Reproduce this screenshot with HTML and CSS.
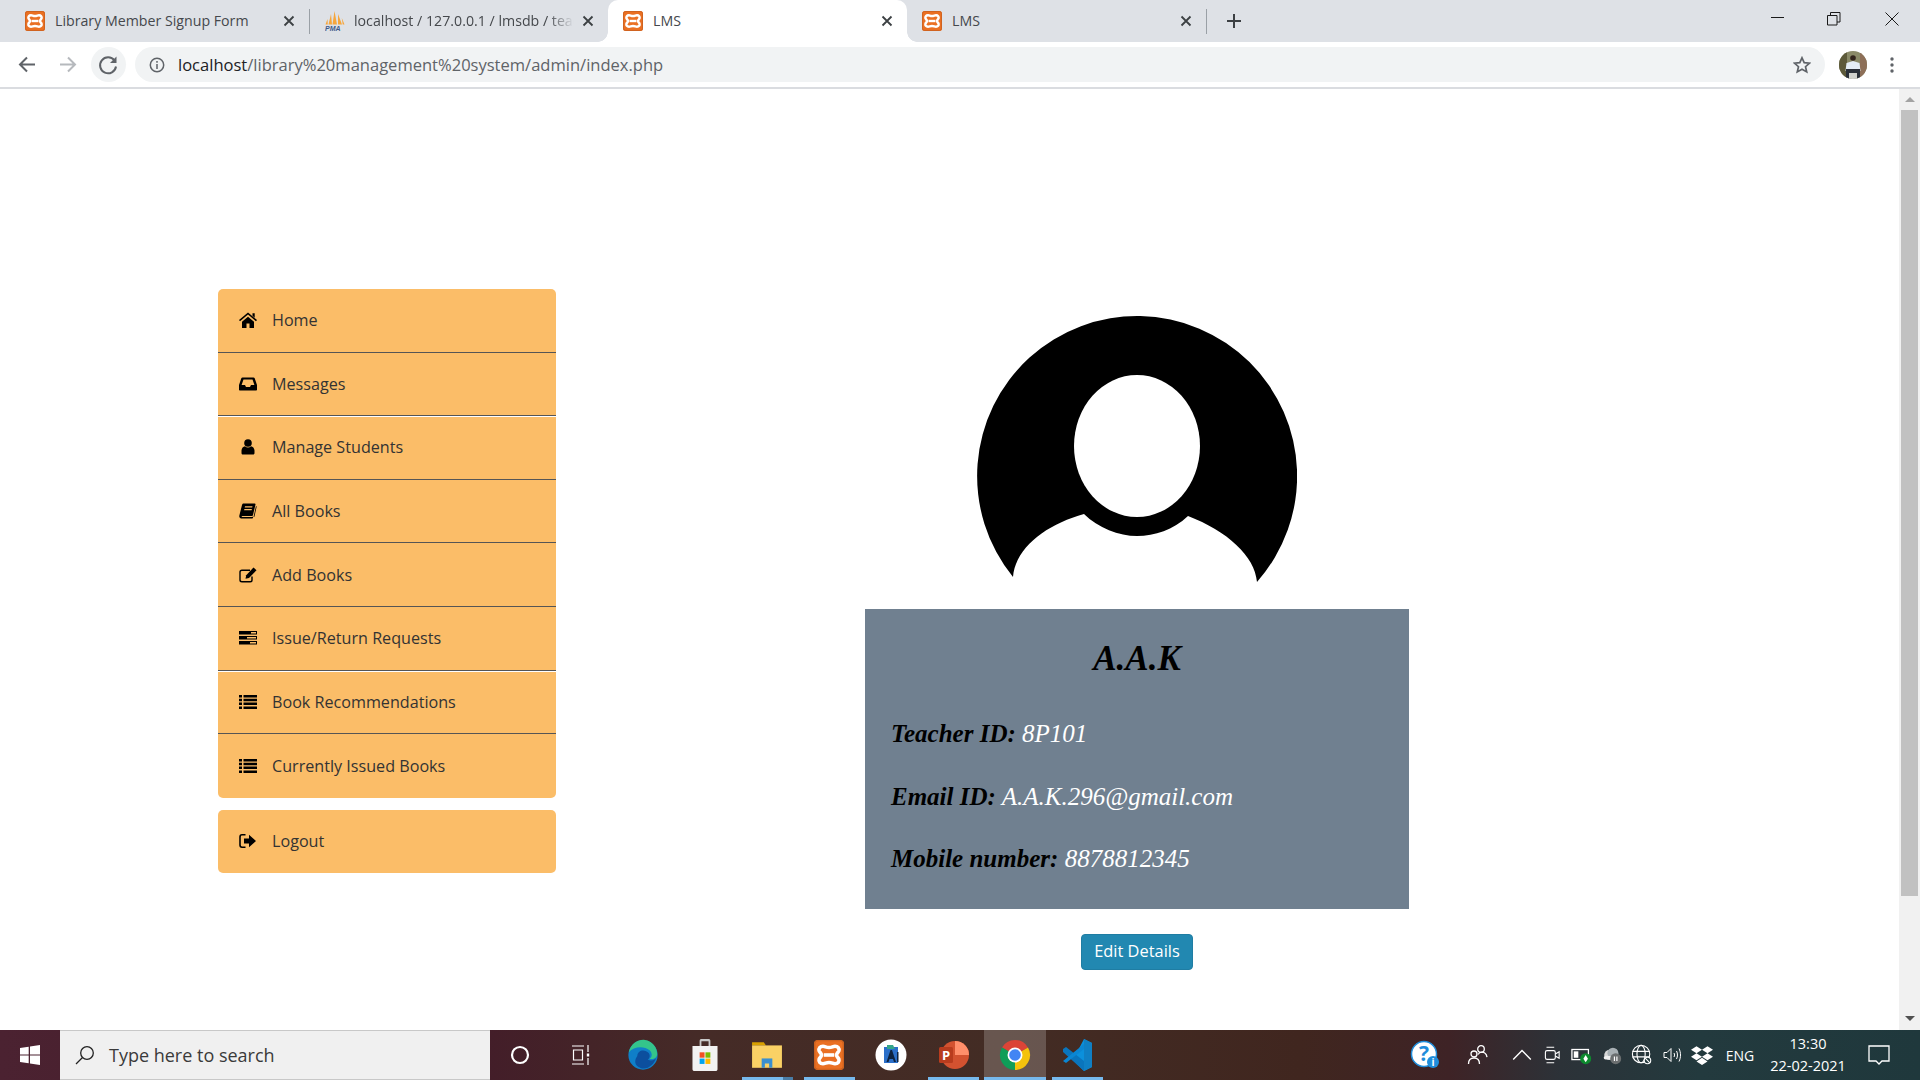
FILE: index.html
```html
<!DOCTYPE html>
<html lang="en">
<head>
<meta charset="utf-8">
<title>LMS</title>
<link rel="stylesheet" href="styles.css">
</head>
<body>
<svg class="defs" width="0" height="0" aria-hidden="true">
  <symbol id="xampp" viewBox="0 0 20 20">
    <rect width="20" height="20" rx="2.5" fill="#ea7023"/>
    <rect x=".5" y=".5" width="19" height="19" rx="2" fill="none" stroke="#c9601f" stroke-width=".8"/>
    <path d="M6 4.200c1.500 0 2 .8 4 .8s2.500-.8 4-.8c2 0 3 1.500 2.600 3-.3 1-1.600 1.600-1.600 2.800s1.300 1.800 1.600 2.800c.4 1.500-.6 3-2.600 3-1.500 0-2-.8-4-.8s-2.500.8-4 .8c-2 0-3-1.500-2.600-3 .3-1 1.600-1.600 1.600-2.800S3.700 8.200 3.400 7.200C3 5.700 4 4.200 6 4.200z" fill="none" stroke="#fff" stroke-width="2.400"/>
    <path d="M6.500 10h7" stroke="#fff" stroke-width="2.400"/>
  </symbol>
  <symbol id="list" viewBox="0 0 18 14">
    <path d="M0 0h3v2.500H0zM4.500 0H18v2.500H4.500zM0 3.800h3v2.500H0zM4.500 3.800H18v2.500H4.500zM0 7.600h3v2.500H0zM4.500 7.600H18v2.500H4.500zM0 11.400h3V14H0zM4.500 11.400H18V14H4.500z" fill="#000"/>
  </symbol>
</svg>
<div class="screen">
  <header class="tabstrip">
    <div class="tab tab-first">
      <svg class="favicon"><use href="#xampp"/></svg>
      <span class="tab-title">Library Member Signup Form</span>
      <svg class="tab-close" viewBox="0 0 12 12"><path d="M1.500 1.500l9 9M10.500 1.500l-9 9"/></svg>
    </div>
    <span class="tab-sep"></span>
    <div class="tab tab-pma">
      <svg class="favicon" viewBox="0 0 20 20">
        <path d="M9.500 0l2.500 13.500H7.500zM6 3l1 10.500H3.500zM13 3l4 10.500h-4zM2.500 8l.3 5.500H.5zM16.800 7l2.700 6.500h-1.800z" fill="#f6a63c"/>
        <text class="pma-text" x="0" y="19.500">PMA</text>
      </svg>
      <span class="tab-title tab-fade">localhost / 127.0.0.1 / lmsdb / teacher</span>
      <svg class="tab-close" viewBox="0 0 12 12"><path d="M1.500 1.500l9 9M10.500 1.500l-9 9"/></svg>
    </div>
    <div class="tab tab-active">
      <svg class="favicon"><use href="#xampp"/></svg>
      <span class="tab-title">LMS</span>
      <svg class="tab-close" viewBox="0 0 12 12"><path d="M1.500 1.500l9 9M10.500 1.500l-9 9"/></svg>
    </div>
    <div class="tab">
      <svg class="favicon"><use href="#xampp"/></svg>
      <span class="tab-title">LMS</span>
      <svg class="tab-close" viewBox="0 0 12 12"><path d="M1.500 1.500l9 9M10.500 1.500l-9 9"/></svg>
    </div>
    <span class="tab-sep"></span>
    <svg class="new-tab" viewBox="0 0 16 16"><path d="M8 1v14M1 8h14"/></svg>
    <div class="win-controls">
      <div class="win-btn"><svg viewBox="0 0 14 14"><path d="M0 5.500h13"/></svg></div>
      <div class="win-btn"><svg viewBox="0 0 14 14"><path d="M.5 3.500h9.500v9.500H.5zM3.500 3.500V.5H13V10h-3"/></svg></div>
      <div class="win-btn"><svg viewBox="0 0 14 14"><path d="M.5.5l13 13M13.500.5l-13 13"/></svg></div>
    </div>
  </header>

  <div class="toolbar">
    <svg class="nav-btn" viewBox="0 0 35 35"><path d="M25 17.500H11M17 10.500l-7 7 7 7" class="nav-dark"/></svg>
    <svg class="nav-btn" viewBox="0 0 35 35"><path d="M10 17.500h14M18 10.500l7 7-7 7" class="nav-light"/></svg>
    <svg class="nav-btn nav-reload" viewBox="0 0 35 35"><path d="M23.500 13.500a8 8 0 1 0 1.500 6" class="nav-dark"/><path d="M25.500 9.500v6.500H19z" class="nav-fill"/></svg>
    <div class="omnibox">
      <svg class="info-icon" viewBox="0 0 16 16"><circle cx="8" cy="8" r="6.700"/><path d="M8 7v5M8 4v1.800"/></svg>
      <span class="url"><span class="url-host">localhost</span>/library%20management%20system/admin/index.php</span>
      <svg class="star" viewBox="0 0 18 18"><path d="M9 1.800l2.200 4.900 5.300.5-4 3.500 1.200 5.200L9 13.200l-4.700 2.700 1.200-5.200-4-3.500 5.300-.5z"/></svg>
    </div>
    <svg class="profile" viewBox="0 0 28 28">
      <defs><clipPath id="round"><circle cx="14" cy="14" r="14"/></clipPath></defs>
      <g clip-path="url(#round)">
        <rect width="28" height="28" fill="#8a8a68"/>
        <rect width="8" height="28" fill="#5d5a3a"/>
        <rect x="21" width="7" height="28" fill="#8d6f58"/>
        <rect x="8" y="22" width="12" height="6" fill="#d0d2cd"/>
        <path d="M7.500 12l6.500-2 6.500 2 1 8h-15z" fill="#e4eef6"/>
        <circle cx="14" cy="7" r="2.800" fill="#33261d"/>
        <path d="M7 18h14v10h-3v-6h-8v6H7z" fill="#2a3038"/>
      </g>
    </svg>
    <svg class="kebab" viewBox="0 0 4 16"><circle cx="2" cy="2" r="1.700"/><circle cx="2" cy="8" r="1.700"/><circle cx="2" cy="14" r="1.700"/></svg>
  </div>

  <div class="viewport">
    <main class="page">
      <nav class="sidebar">
        <ul class="menu">
          <li class="menu-item"><svg class="menu-icon" viewBox="0 0 18 16"><path d="M9 .5l9 7.600-1 1.200L9 2.600 1 9.300 0 8.100zM13.500 1.200h2.200v4.500l-2.200-1.900zM3 9.800l6-5 6 5V16h-4.500v-4.500h-3V16H3z"/></svg>Home</li>
          <li class="menu-item menu-split"><svg class="menu-icon" viewBox="0 0 18 16"><path fill-rule="evenodd" d="M3.500 1.500h11c.6 0 1 .3 1.200.8L18 9v4.500c0 .6-.5 1-1 1H1c-.5 0-1-.4-1-1V9l2.300-6.700c.2-.5.6-.8 1.200-.8zM4.500 3.500L2.600 9H6l1 2h4l1-2h3.400l-1.900-5.500z"/></svg>Messages</li>
          <li class="menu-item"><svg class="menu-icon" viewBox="0 0 18 16"><circle cx="9" cy="4" r="3.800"/><path d="M2.500 14v-2.500C2.500 9.500 4.300 7.300 6 7.300c.8.800 1.900 1.200 3 1.200s2.200-.4 3-1.200c1.700 0 3.500 2.200 3.500 4.200V14c0 1-.7 1.500-1.500 1.500H4c-.8 0-1.500-.5-1.500-1.500z"/></svg>Manage Students</li>
          <li class="menu-item"><svg class="menu-icon" viewBox="0 0 18 16"><path fill-rule="evenodd" d="M4.500.5h11.200c.6 0 .9.500.8 1L14 12c-.2.800-.6 1-1.300 1H3.500c-.9 0-1.100.8-.6 1h10.300l.9-.4-.1 1.100c-.1.300-.4.800-1 .8H2.300C.8 15.500 0 14 .3 12.700L3 2c.2-.9.700-1.500 1.500-1.500zM6 3.300l-.3 1.200h7.500l.3-1.200zM5.400 6l-.3 1.200h7.500l.3-1.200z"/><path d="M17 3l.7.500-2.300 10.300-.9.400z"/></svg>All Books</li>
          <li class="menu-item"><svg class="menu-icon" viewBox="0 0 18 16"><path d="M13 9.500V13c0 1-.7 1.800-1.800 1.800H3c-1.100 0-2-.8-2-1.800V5c0-1 .9-1.800 2-1.800h8" fill="none" stroke="#000" stroke-width="1.400"/><path d="M14.500.500l3 2.700-7.500 7.800-3.500.8.700-3.500z"/></svg>Add Books</li>
          <li class="menu-item menu-split"><svg class="menu-icon" viewBox="0 0 18 16"><path fill-rule="evenodd" d="M0 1h18v3.600H0zM12 2v1.500h5V2zM0 6h18v3.600H0zM8 7v1.500h9V7zM0 11h18v3.600H0zM11 12v1.500h6V12z"/></svg>Issue/Return Requests</li>
          <li class="menu-item"><svg class="menu-icon"><use href="#list"/></svg>Book Recommendations</li>
          <li class="menu-item"><svg class="menu-icon"><use href="#list"/></svg>Currently Issued Books</li>
        </ul>
        <ul class="menu menu-logout">
          <li class="menu-item"><svg class="menu-icon" viewBox="0 0 18 16"><path d="M6.500 1.800H3C1.800 1.800 1 2.700 1 4v8c0 1.300.8 2.200 2 2.200h3.500" fill="none" stroke="#000" stroke-width="1.600"/><path d="M10 1.800l7 6.200-7 6.200v-3.700H5V5.500h5z"/></svg>Logout</li>
        </ul>
      </nav>
      <section class="profile-col">
        <svg class="avatar" viewBox="0 0 320 272">
          <path d="M36 261A160 160 0 1 1 280 266C278 240 250 215 211 200 196 214 178 220 160 220 142 220 121 212 107 198 70 208 38 232 36 261Z"/>
          <ellipse cx="160" cy="130" rx="63" ry="71" fill="#fff"/>
        </svg>
        <div class="card">
          <h3 class="card-name">A.A.K</h3>
          <p class="card-row"><b class="card-label">Teacher ID:</b> 8P101</p>
          <p class="card-row"><b class="card-label">Email ID:</b> A.A.K.296@gmail.com</p>
          <p class="card-row"><b class="card-label">Mobile number:</b> 8878812345</p>
        </div>
        <button class="edit-btn" type="button">Edit Details</button>
      </section>
    </main>
    <aside class="scrollbar">
      <span class="arrow-up"></span>
      <span class="thumb"></span>
      <span class="arrow-down"></span>
    </aside>
  </div>

  <footer class="taskbar">
    <div class="start">
      <svg class="win-logo" viewBox="0 0 20 20"><path d="M0 3l8.700-1.300V9.500H0zM10 1.500L20 0v9.500H10zM0 10.500h8.700v7.800L0 17zM10 10.500h10V20l-10-1.500z"/></svg>
    </div>
    <div class="search">
      <svg class="search-icon" viewBox="0 0 20 20"><circle cx="12" cy="8" r="6.300"/><path d="M7.500 12.500L1 19"/></svg>
      <span class="search-text">Type here to search</span>
    </div>
    <div class="task-cell cell-cortana">
      <svg class="cell-icon-sm" viewBox="0 0 20 20"><circle cx="10" cy="10" r="8" fill="none" stroke="#fff" stroke-width="2.200"/></svg>
    </div>
    <div class="task-cell cell-view">
      <svg class="cell-icon-sm" viewBox="0 0 20 20"><path d="M1 1h12M1 19h12M2.500 5h9v10h-9zM17 0v7M17 13v7" fill="none" stroke="#fff" stroke-width="1.200"/><path d="M15.800 8.500h2.400v3h-2.400z" fill="#fff"/></svg>
    </div>
    <div class="task-cell">
      <svg class="cell-icon" viewBox="0 0 32 36"><circle cx="16" cy="18" r="15.500" fill="#0f7fc8"/><path d="M1 15C3 5 12 1 18 2c8 1 13 8 13 15 0 4-4 6-8 5 3-2 3-6 0-9C17 8 6 9 1 15z" fill="#34c48b"/><path d="M10 19c0-6 8-8 12-3 2 3 1 6-1 7 4 2 8 0 9-2-2 7-9 13-16 11C6 29 7 23 10 19z" fill="#0c4f9e"/></svg>
    </div>
    <div class="task-cell">
      <svg class="cell-icon" viewBox="0 0 32 38"><path d="M10 9V3c0-1.500 1-2 2-2h8c1 0 2 .5 2 2v6h-2V3.500h-8V9z" fill="#c8c8c8"/><path d="M2 9h28v26c0 1-1 2-2 2H4c-1 0-2-1-2-2z" fill="#f2f2f2"/><path d="M10 16h5.500v6H10z" fill="#f25022"/><path d="M16.500 16H22v6h-5.500z" fill="#7fba00"/><path d="M10 23h5.500v6H10z" fill="#00a4ef"/><path d="M16.500 23H22v6h-5.500z" fill="#ffb900"/></svg>
    </div>
    <div class="task-cell cell-open cell-stacked">
      <svg class="cell-icon" viewBox="0 0 30 30"><path d="M1 3h11l2 3H1z" fill="#d8a000"/><path d="M1 6h28v21H1z" fill="#fad165"/><path d="M10 18h10v9h-3v-4h-4v4h-3z" fill="#3a8fd0"/><path d="M7 13h16l1.500 5H5.500z" fill="#fad165"/></svg>
    </div>
    <div class="task-cell cell-open">
      <svg class="cell-icon-xampp"><use href="#xampp"/></svg>
    </div>
    <div class="task-cell">
      <svg class="cell-icon" viewBox="0 0 32 32"><circle cx="16" cy="16" r="15.500" fill="#fff"/><path d="M9 8h14v16H9z" fill="#2b6fc9"/><path d="M12 6h6l2 4h-8z" fill="#35a58a"/><path d="M11.500 23l4-12h1.500l4 12h-2l-1-3h-3.500l-1 3z" fill="#0d2340"/><path d="M22 13h1.500v10H22z" fill="#0d2340"/></svg>
    </div>
    <div class="task-cell cell-open">
      <svg class="cell-icon" viewBox="0 0 32 32"><circle cx="18" cy="16" r="14" fill="#d35230"/><path d="M18 2a14 14 0 0 1 14 14H18z" fill="#ff8f6b"/><rect x="2" y="8" width="14" height="16" rx="1.500" fill="#b83c1e"/><text class="ppt-text" x="5" y="21">P</text></svg>
    </div>
    <div class="task-cell cell-open cell-active">
      <svg class="cell-icon" viewBox="0 0 32 32"><path d="M16 16L3 8.500A15 15 0 0 1 29 8.500z" fill="#db4437"/><path d="M16 16l13-7.500A15 15 0 0 1 16 31z" fill="#f4c20d"/><path d="M16 16v15A15 15 0 0 1 3 8.500z" fill="#0f9d58"/><circle cx="16" cy="16" r="7.500" fill="#fff"/><circle cx="16" cy="16" r="5.800" fill="#4285f4"/></svg>
    </div>
    <div class="task-cell cell-open">
      <svg class="cell-icon" viewBox="0 0 32 34"><path d="M23 1l8 4v24l-8 4-13-13 13-10v21L13 20z" fill="#0b90dc"/><path d="M23 1v32l8-4V5z" fill="#0f7fc4"/><path d="M2 11l3-2 18 14v10L2 14z" fill="#0a75bd"/><path d="M2 23l21-17v5L5 25z" fill="#0a86d3"/></svg>
    </div>
    <div class="tray">
      <svg class="tray-icon tray-help" viewBox="0 0 30 30">
        <circle cx="14" cy="14" r="12.500" fill="#fff" stroke="#1f8ddb" stroke-width="1.500"/>
        <text class="help-text" x="14" y="21">?</text>
        <circle cx="23" cy="22" r="6" fill="#1f8ddb"/>
        <text class="help-i" x="23" y="26">i</text>
      </svg>
      <svg class="tray-icon tray-people" viewBox="0 0 22 22"><g fill="none" stroke="#fff" stroke-width="1.300"><circle cx="14" cy="5" r="3.300"/><circle cx="7" cy="10" r="3"/><path d="M1.500 20c0-3.500 2-6 5.500-6s5.500 2.500 5.500 6M11 10.500c1-1.500 2-2.300 3.500-2.300 3 0 5 2 5.500 5"/></g></svg>
      <svg class="tray-icon" viewBox="0 0 20 20"><path d="M2 14l8-8 8 8" fill="none" stroke="#fff" stroke-width="1.300"/></svg>
      <svg class="tray-icon" viewBox="0 0 20 20"><g fill="none" stroke="#fff" stroke-width="1"><rect x="4" y="6" width="9" height="8" rx="1.500"/><path d="M13 9l3.500-2v6L13 11M5 3h7M5 17h7"/></g></svg>
      <svg class="tray-icon tray-badge" viewBox="0 0 24 24"><rect x="1" y="6" width="18" height="11" fill="none" stroke="#fff" stroke-width="1.400"/><rect x="3" y="8" width="5" height="7" fill="#fff"/><circle cx="16" cy="16" r="6" fill="#0d8a2e"/><path d="M16 12l2.500 4-2.500 4-2.500-4z" fill="#fff"/></svg>
      <svg class="tray-icon tray-badge" viewBox="0 0 24 24"><circle cx="9" cy="12" r="5.500" fill="#d8d8d8"/><circle cx="13" cy="10" r="6" fill="#a8b0b4"/><rect x="3" y="13" width="12" height="4" rx="2" fill="#eee"/><circle cx="16" cy="16" r="6" fill="#6b6f70"/><path d="M14 13.500h1.300v5H14zM16.700 13.500H18v5h-1.300z" fill="#fff"/></svg>
      <svg class="tray-icon tray-badge" viewBox="0 0 24 24"><g fill="none" stroke="#fff" stroke-width="1.200"><circle cx="11" cy="11" r="9.500"/><ellipse cx="11" cy="11" rx="4.500" ry="9.500"/><path d="M1.500 8h19M1.500 14h19"/><circle cx="18" cy="18" r="3.500" fill="#243a3d"/><path d="M15.500 15.500l5 5"/></g></svg>
      <svg class="tray-icon" viewBox="0 0 22 22"><g fill="none" stroke="#fff" stroke-width="1"><path d="M3 8.500h3l4-4v13l-4-4H3z"/><path d="M13 9c.7 1.300.7 2.700 0 4M15.500 7c1.300 2.500 1.300 5.500 0 8M18 4.500c2 4 2 9 0 13"/></g></svg>
      <svg class="tray-icon" viewBox="0 0 20 20"><path d="M5 2l5 3.200-5 3.200L0 5.200zM15 2l5 3.200-5 3.200-5-3.200zM0 11.600l5-3.200 5 3.200-5 3.200zM20 11.600l-5-3.200-5 3.200 5 3.200zM5 15.800l5-3.200 5 3.200-5 3.200z" fill="#fff"/></svg>
      <span class="tray-lang">ENG</span>
      <div class="clock"><span>13:30</span><span>22-02-2021</span></div>
      <svg class="notif" viewBox="0 0 22 22"><path d="M1 2h20v15h-7l-3 3-3-3H1z" fill="none" stroke="#fff" stroke-width="1.300"/></svg>
    </div>
  </footer>
</div>
</body>
</html>
```

FILE: styles.css
```css
* { box-sizing: border-box; }
html, body { margin: 0; padding: 0; height: 100%; overflow: hidden; background: #fff; }
.defs { display: block; height: 0; width: 0; }
.screen { width: 1920px; height: 1080px; display: flex; flex-direction: column; font-family: "Open Sans", sans-serif; }

/* tab strip */
.tabstrip { height: 42px; flex: none; display: flex; align-items: stretch; background: #dee1e6; }
.tab { width: 299px; padding: 0 14px 0 15px; display: flex; align-items: center; position: relative; }
.tab-first { width: 309px; padding-left: 25px; }
.tab-pma { width: 298px; }
.tab-active { background: #fff; border-radius: 10px 10px 0 0; }
.tab-active::before, .tab-active::after { content: ""; position: absolute; bottom: 0; width: 10px; height: 10px; }
.tab-active::before { left: -10px; background: radial-gradient(circle at 0 0, #dee1e6 9.500px, #fff 10px); }
.tab-active::after { right: -10px; background: radial-gradient(circle at 100% 0, #dee1e6 9.500px, #fff 10px); }
.favicon { width: 20px; height: 20px; flex: none; }
.tab-title { flex: 1; margin-left: 10px; padding-bottom: 2px; font-size: 14.200px; color: #45484c; white-space: nowrap; overflow: hidden; }
.tab-pma .tab-title { margin-left: 9px; }
.tab-fade { -webkit-mask-image: linear-gradient(90deg, #000 88%, transparent 100%); mask-image: linear-gradient(90deg, #000 88%, transparent 100%); margin-right: 8px; }
.tab-close { width: 12px; height: 12px; flex: none; fill: none; stroke: #3c4043; stroke-width: 1.800; }
.tab-sep { width: 1px; height: 25px; margin-top: 9px; background: #9aa0a6; flex: none; }
.new-tab { width: 16px; height: 16px; margin: 13px 0 0 19px; flex: none; fill: none; stroke: #3c4043; stroke-width: 2; }
.pma-text { font: italic bold 7px "Liberation Sans", sans-serif; fill: #3f5a8a; }
.win-controls { margin-left: auto; display: flex; }
.win-btn { width: 57px; padding-top: 12px; display: flex; justify-content: center; }
.win-btn:nth-child(2) { padding-right: 2px; }
.win-btn svg { width: 14px; height: 14px; fill: none; stroke: #1a1a1a; stroke-width: 1; }

/* toolbar */
.toolbar { height: 47px; flex: none; padding: 5px 0 0 10px; display: flex; align-items: flex-start; gap: 5px; background: #fff; border-bottom: 2px solid #dadce0; }
.nav-btn { width: 35px; height: 35px; flex: none; fill: none; stroke-width: 2; }
.nav-dark { stroke: #5f6368; fill: none; stroke-width: 2; }
.nav-light { stroke: #b6b9bd; }
.nav-fill { fill: #5f6368; stroke: none; }
.nav-reload { margin-left: 1px; background: #f1f3f4; border-radius: 50%; }
.omnibox { width: 1690px; height: 35px; margin-left: 4px; flex: none; padding: 0 14px 0 14px; display: flex; align-items: center; background: #f1f3f4; border-radius: 18px; }
.info-icon { width: 16px; height: 16px; flex: none; fill: none; stroke: #5f6368; stroke-width: 1.500; }
.url { margin-left: 13px; font-size: 16.550px; color: #5f6368; white-space: nowrap; }
.url-host { color: #202124; }
.star { width: 18px; height: 18px; margin-left: auto; fill: none; stroke: #5f6368; stroke-width: 1.700; }
.profile { width: 28px; height: 28px; margin: 4px 0 0 9px; flex: none; }
.kebab { width: 4px; height: 16px; margin: 10px 0 0 18px; flex: none; fill: #5f6368; }

/* page */
.viewport { height: 941px; flex: none; display: flex; }
.page { width: 1899px; flex: none; display: flex; align-items: flex-start; padding: 200px 0 0 218px; }
.sidebar { width: 338px; flex: none; display: flex; flex-direction: column; gap: 12.500px; }
.menu { margin: 0; padding: 0; list-style: none; background: #fbbd68; border-radius: 5px; overflow: hidden; }
.menu-item { height: 63.600px; padding: 0 0 0 21px; display: flex; align-items: center; font-size: 16.150px; color: #333; border-bottom: 1px solid #555; position: relative; }
.menu-item:last-child { border-bottom: none; }
.menu-logout .menu-item { height: 62.600px; padding-bottom: 2px; }
.menu-split { box-shadow: 0 1px 0 #fff; z-index: 1; }
.menu-icon { width: 18px; height: 16px; margin-right: 15px; flex: none; fill: #000; }

.profile-col { width: 544px; margin: 27px 0 0 309px; flex: none; display: flex; flex-direction: column; align-items: center; }
.avatar { width: 320px; height: 272px; flex: none; margin-bottom: 21px; fill: #000; }
.card { width: 100%; height: 300px; padding: 30px 26px 0; background: #708090; font-family: "Liberation Serif", serif; font-style: italic; color: #fff; }
.card-name { margin: 0 0 24px; font-size: 35px; line-height: 40px; font-weight: bold; text-align: center; color: #000; }
.card-row { margin: 0; font-size: 25px; line-height: 62.500px; white-space: nowrap; }
.card-label { color: #000; }
.edit-btn { width: 112px; height: 36px; margin-top: 25px; padding: 0 0 3px; font: 16.400px "Open Sans", sans-serif; color: #fff; background: #2288b1; border: 1px solid #1f7da3; border-radius: 4px; }

/* scrollbar */
.scrollbar { width: 21px; flex: none; display: flex; flex-direction: column; align-items: center; background: #f1f1f1; }
.arrow-up, .arrow-down { width: 0; height: 0; flex: none; border-left: 5px solid transparent; border-right: 5px solid transparent; }
.arrow-up { margin-top: 8px; border-bottom: 5px solid #a3a3a3; }
.thumb { width: 17px; height: 786px; margin-top: 8px; flex: none; background: #c1c1c1; }
.arrow-down { margin-top: 120px; border-top: 5px solid #505050; }

/* taskbar */
.taskbar { height: 50px; flex: none; display: flex; align-items: stretch; background: linear-gradient(90deg, #4b2231 0, #431d29 480px, #452b27 700px, #432c24 1000px, #40261f 1300px, #3e2326 1450px, #2c3238 1560px, #233a3e 1700px, #1f383c 1920px); }
.start { width: 60px; flex: none; display: flex; align-items: center; justify-content: center; }
.win-logo { width: 20px; height: 20px; fill: #fff; }
.search { width: 430px; flex: none; padding-left: 15px; display: flex; align-items: center; background: #f0f0f0; border-top: 1px solid #c8c8c8; border-bottom: 1px solid #c8c8c8; }
.search-icon { width: 20px; height: 20px; flex: none; fill: none; stroke: #222; stroke-width: 1.300; }
.search-text { margin-left: 14px; font-size: 18px; color: #3a3a3a; }
.task-cell { width: 62px; flex: none; display: flex; align-items: center; justify-content: center; position: relative; }
.cell-cortana { width: 60px; }
.cell-view { width: 62px; }
.cell-icon { width: 32px; height: 34px; }
.cell-icon-sm { width: 20px; height: 20px; }
.cell-icon-xampp { width: 30px; height: 30px; }
.cell-open::after { content: ""; position: absolute; left: 6px; right: 5px; bottom: 0; height: 3px; background: #76b9ed; }
.cell-stacked::after { background: linear-gradient(90deg, #76b9ed 80%, #4a7da6 80%); }
.cell-active { background: rgba(255, 255, 255, .2); }
.cell-active::after { left: 0; right: 0; }
.ppt-text { font: bold 13px "Open Sans", sans-serif; fill: #fff; }
.tray { margin-left: auto; padding-right: 21px; display: flex; align-items: center; }
.tray-icon { width: 30px; height: 22px; flex: none; }
.tray-help { height: 30px; margin-right: 23px; }
.tray-people { margin-right: 14px; }
.help-text { font: bold 21px "Open Sans", sans-serif; fill: #1f8ddb; text-anchor: middle; }
.help-i { font: bold 10px "Open Sans", sans-serif; fill: #fff; text-anchor: middle; }
.tray-lang { width: 40px; margin-left: 3px; flex: none; font-size: 14px; color: #fff; text-align: center; }
.clock { width: 90px; margin-left: 3px; flex: none; display: flex; flex-direction: column; align-items: center; gap: 4px; font-size: 14.500px; line-height: 18px; color: #fff; }
.notif { width: 22px; height: 22px; margin: 0 9px 0 15px; flex: none; }
```
